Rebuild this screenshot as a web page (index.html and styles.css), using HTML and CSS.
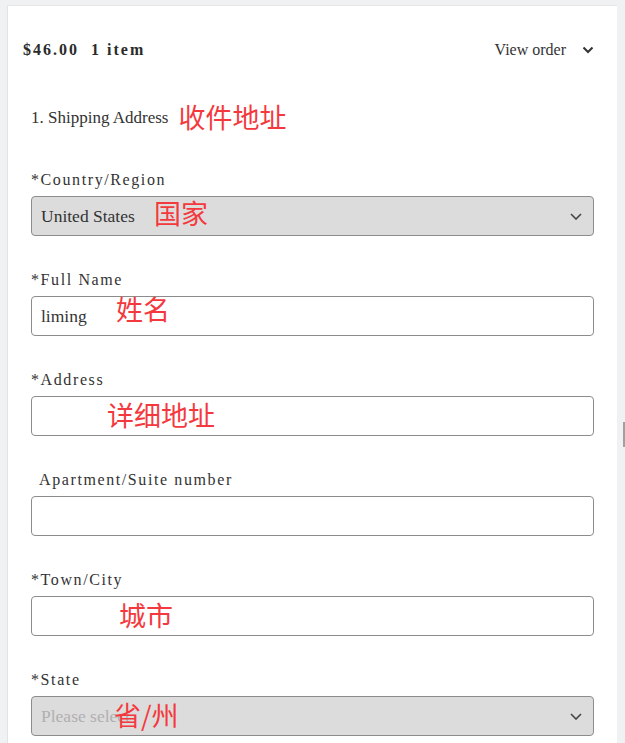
FILE: index.html
```html
<!DOCTYPE html>
<html lang="en">
<head>
<meta charset="utf-8">
<title>Checkout - Shipping Address</title>
<link rel="stylesheet" href="styles.css">
</head>
<body>
<div class="page">
  <main class="card">
    <header class="summary">
      <div class="total"><span class="price">$46.00</span><span class="count">1 item</span></div>
      <div class="view-order">
        <span>View order</span>
        <svg class="chev-head" width="12" height="8" viewBox="0 0 12 8"><path d="M1.5 1.5 L6 6 L10.5 1.5" fill="none" stroke="#333" stroke-width="2"/></svg>
      </div>
    </header>

    <section class="form">
      <h2 class="step">1. Shipping Address <span class="note note-inline">收件地址</span></h2>

      <div class="field">
        <label class="label">*Country/Region</label>
        <div class="box select">
          <span class="value">United States</span>
          <span class="note note-country">国家</span>
          <svg class="chev" width="12" height="7" viewBox="0 0 12 7"><path d="M1 1 L6 6 L11 1" fill="none" stroke="#444" stroke-width="1.6"/></svg>
        </div>
      </div>

      <div class="field">
        <label class="label">*Full Name</label>
        <div class="box">
          <span class="value">liming</span>
          <span class="note note-name">姓名</span>
        </div>
      </div>

      <div class="field">
        <label class="label">*Address</label>
        <div class="box">
          <span class="note note-address">详细地址</span>
        </div>
      </div>

      <div class="field">
        <label class="label label-indent">Apartment/Suite number</label>
        <div class="box"></div>
      </div>

      <div class="field">
        <label class="label">*Town/City</label>
        <div class="box">
          <span class="note note-city">城市</span>
        </div>
      </div>

      <div class="field">
        <label class="label">*State</label>
        <div class="box select">
          <span class="value placeholder">Please select</span>
          <span class="note note-state">省/州</span>
          <svg class="chev" width="12" height="7" viewBox="0 0 12 7"><path d="M1 1 L6 6 L11 1" fill="none" stroke="#444" stroke-width="1.6"/></svg>
        </div>
      </div>
    </section>
  </main>
  <div class="scroll-mark"></div>
</div>
</body>
</html>
```

FILE: styles.css
```css
html, body {
  margin: 0;
  padding: 0;
  background: #f0f1f2;
  height: 743px;
  overflow: hidden;
}

.page {
  position: relative;
  padding: 5px 8px 0 7px;
}

.card {
  width: 610px;
  height: 760px;
  background: #ffffff;
  border-top: 1px solid #e6e6e6;
  border-left: 1px solid #e3e3e3;
  box-sizing: border-box;
  padding: 34px 23px 0 15px;
  font-family: "Liberation Serif", "DejaVu Serif", serif;
  color: #333;
}

.summary {
  display: flex;
  justify-content: space-between;
  align-items: center;
  height: 20px;
}

.total {
  font-weight: bold;
  font-size: 16px;
  letter-spacing: 2px;
  color: #2b2b2b;
  display: flex;
  gap: 12px;
}

.view-order {
  display: flex;
  align-items: center;
  gap: 16px;
  font-size: 16px;
  color: #333;
}

.chev-head {
  display: block;
}

.form {
  padding-left: 8px;
}

.step {
  margin: 46px 0 0 0;
  height: 24px;
  line-height: 24px;
  font-size: 17px;
  font-weight: normal;
  color: #333;
  display: flex;
  align-items: center;
}

.note {
  font-family: "Noto Sans CJK SC", "Noto Sans", sans-serif;
  color: #f4393e;
  font-size: 27px;
  line-height: 1;
}

.note-inline {
  margin-left: 10px;
  position: relative;
  top: -2px;
}

.field {
  display: flex;
  flex-direction: column;
  margin-top: 40px;
}

.field + .field {
  margin-top: 34px;
}

.label {
  height: 20px;
  line-height: 20px;
  font-size: 16px;
  letter-spacing: 1.6px;
  color: #333;
  margin-bottom: 6px;
}

.label-indent {
  padding-left: 8px;
}

.box {
  position: relative;
  height: 40px;
  box-sizing: border-box;
  border: 1px solid #8c8c8c;
  border-radius: 4px;
  background: #fff;
  display: flex;
  align-items: center;
  padding: 0 11px 0 9px;
}

.box.select {
  background: #dcdcdc;
}

.value {
  font-size: 17.5px;
  color: #333;
}

.placeholder {
  color: #b0b0b0;
  white-space: nowrap;
}

.chev {
  margin-left: auto;
  display: block;
}

.box .note {
  position: absolute;
}

.note-country { left: 122px; top: 2px; }
.note-name { left: 84px; top: -2px; }
.note-address { left: 75px; top: 4px; }
.note-city { left: 87px; top: 4px; }
.note-state { left: 82px; top: 4px; }

.scroll-mark {
  position: absolute;
  left: 623px;
  top: 422px;
  width: 2px;
  height: 25px;
  background: #a0a0a0;
}
```
